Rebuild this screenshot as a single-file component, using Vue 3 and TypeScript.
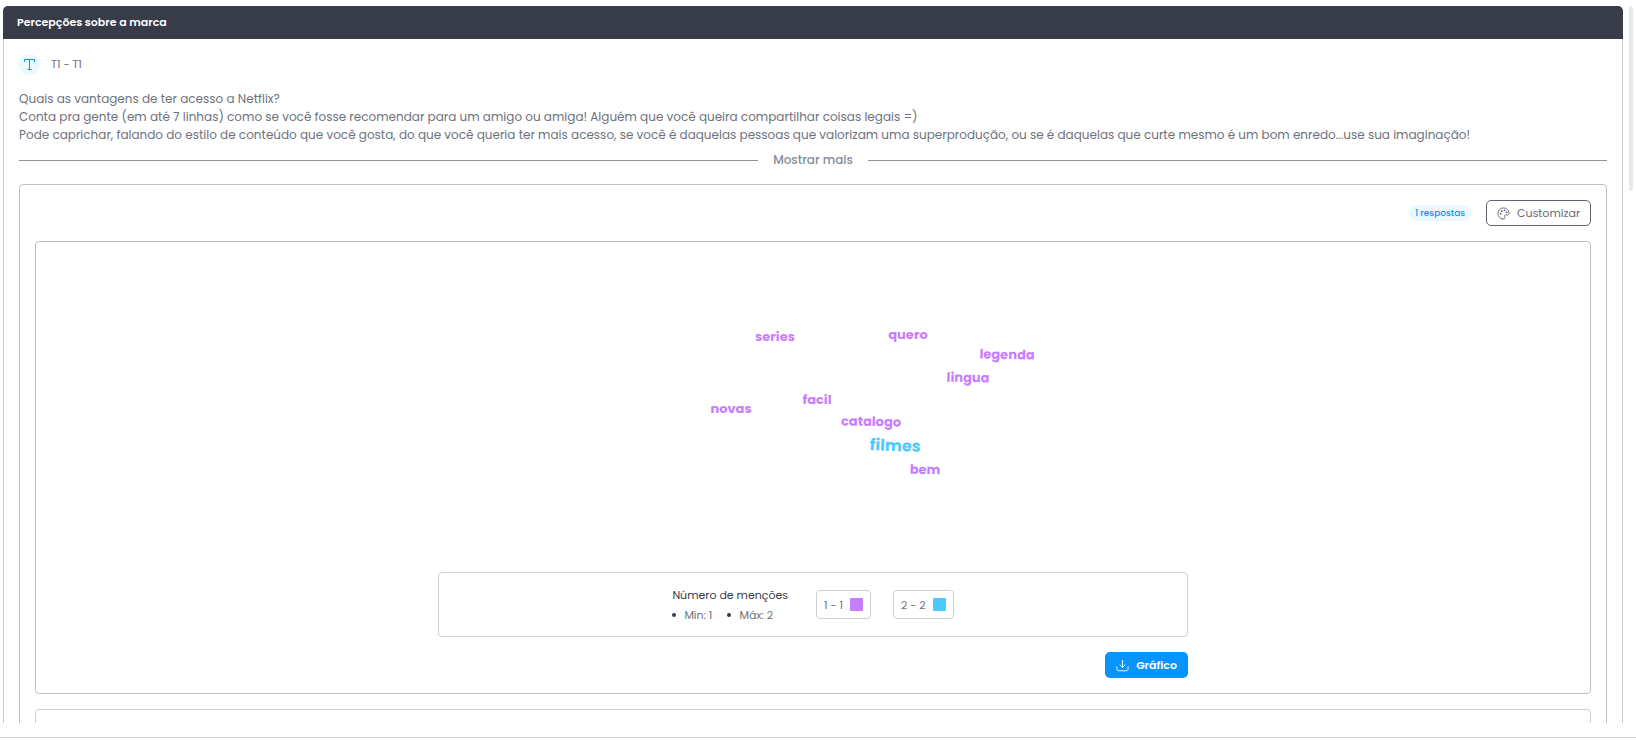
<script setup lang="ts">
interface CloudWord {
  text: string
  x: number
  y: number
  angle: number
  size: number
  color: string
}

const purple = '#c77dff'
const blue = '#4cc9ff'

const description: string[] = [
  'Quais as vantagens de ter acesso a Netflix?',
  'Conta pra gente (em até 7 linhas) como se você fosse recomendar para um amigo ou amiga! Alguém que você queira compartilhar coisas legais =)',
  'Pode caprichar, falando do estilo de conteúdo que você gosta, do que você queria ter mais acesso, se você é daquelas pessoas que valorizam uma superprodução, ou se é daquelas que curte mesmo é um bom enredo...use sua imaginação!',
]

const words: CloudWord[] = [
  { text: 'series', x: 337, y: 84, angle: 0, size: 13, color: purple },
  { text: 'quero', x: 470, y: 82, angle: 0, size: 13, color: purple },
  { text: 'legenda', x: 569, y: 102, angle: 1, size: 13, color: purple },
  { text: 'lingua', x: 530, y: 125, angle: 1, size: 13, color: purple },
  { text: 'facil', x: 379, y: 147, angle: 0, size: 13, color: purple },
  { text: 'novas', x: 293, y: 156, angle: 0, size: 13, color: purple },
  { text: 'catalogo', x: 433, y: 169, angle: 1, size: 13, color: purple },
  { text: 'filmes', x: 457, y: 194, angle: 2, size: 16, color: blue },
  { text: 'bem', x: 487, y: 217, angle: 1, size: 13, color: purple },
]
</script>

<template>
  <div class="page">
    <main class="viewport">
      <section class="card">
        <h1 class="card-title">Percepções sobre a marca</h1>
        <div class="card-body">
          <div class="question">
            <span class="type-badge">
              <svg viewBox="0 0 11 11" width="11" height="11" fill="none" stroke="#0c94f5">
                <path d="M.5 3V.5h10V3M5.500.5v10M3.500 10.500h4" />
              </svg>
            </span>
            <h2 class="question-code">T1 - T1</h2>
          </div>
          <div class="description">
            <p v-for="line in description" :key="line">{{ line }}</p>
          </div>
          <div class="divider"><button type="button" class="more">Mostrar mais</button></div>

          <div class="panel">
            <div class="toolbar">
              <span class="count">1 respostas</span>
              <button type="button" class="button outline">
                <svg viewBox="0 0 14 14" width="13" height="13" fill="none" stroke="currentColor" stroke-linecap="round" stroke-linejoin="round">
                  <path d="M5.400 12.800C2.800 12.100 1 9.800 1 7c0-3.400 2.700-6 6-6s6 2.500 6 5.500c0 1.400-.8 2-2 2H9.300c-1 0-1.500.8-1.100 1.700.5 1 .4 2.800-1.200 2.800-.6 0-1.100-.1-1.600-.2Z" />
                  <circle cx="3.800" cy="7.300" r=".5" />
                  <circle cx="5" cy="4.500" r=".5" />
                  <circle cx="8" cy="3.700" r=".5" />
                  <circle cx="10.300" cy="5.700" r=".5" />
                </svg>
                Customizar
              </button>
            </div>

            <div class="chart">
              <div class="chart-inner">
                <svg class="cloud" viewBox="0 0 750 300" role="img" aria-label="Nuvem de palavras">
                  <text
                    v-for="word in words"
                    :key="word.text"
                    :transform="`translate(${word.x} ${word.y}) rotate(${word.angle})`"
                    :font-size="word.size"
                    :fill="word.color"
                    text-anchor="middle"
                  >{{ word.text }}</text>
                </svg>
                <div class="legend">
                  <div class="mentions">
                    <span class="mentions-title">Número de menções</span>
                    <ul class="range">
                      <li>Mín: 1</li>
                      <li>Máx: 2</li>
                    </ul>
                  </div>
                  <div class="keys">
                    <span class="key">1 - 1 <i class="swatch purple"></i></span>
                    <span class="key">2 - 2 <i class="swatch blue"></i></span>
                  </div>
                </div>
                <button type="button" class="button primary">
                  <svg viewBox="0 0 14 14" width="13" height="13" fill="none" stroke="currentColor" stroke-linecap="round" stroke-linejoin="round">
                    <path d="M1 8.500v2.200c0 1.200.8 2 2 2h8c1.200 0 2-.8 2-2V8.500M7 1.500V9M4.300 6.300 7 9l2.700-2.700" />
                  </svg>
                  Gráfico
                </button>
              </div>
            </div>
            <div class="chart next"></div>
          </div>
        </div>
      </section>
      <div class="scroll-thumb"></div>
    </main>
    <footer class="footer"></footer>
  </div>
</template>

<style>
body {
  background: #fff;
}
</style>

<style scoped>
* {
  box-sizing: border-box;
}

.page {
  display: flex;
  flex-direction: column;
  height: 100vh;
  font-family: Poppins, Inter, sans-serif;
  color: #6e727e;
}

.viewport {
  display: flex;
  flex: 1;
  gap: 6px;
  min-height: 0;
  padding: 6px 3px 0;
  overflow: hidden;
}

.card {
  display: flex;
  flex: 1;
  flex-direction: column;
  min-width: 0;
}

.card-title {
  flex: none;
  margin: 0;
  padding: 0 14px;
  border-radius: 5px 5px 0 0;
  background: #383b48;
  color: #fff;
  font-size: 11px;
  font-weight: 600;
  line-height: 33px;
}

.card-body {
  flex: none;
  padding: 15px;
  border: 1px solid #c9cdd6;
  border-top: 0;
}

.question {
  display: flex;
  align-items: center;
  gap: 11px;
}

.type-badge {
  display: grid;
  place-items: center;
  width: 21px;
  height: 21px;
  border-radius: 50%;
  background: #ebf8ff;
}

.question-code {
  margin: 0;
  font-size: 11px;
  font-weight: 400;
  line-height: 21px;
}

.description {
  margin-top: 15px;
  font-size: 12px;
  line-height: 18px;
}

.description p {
  margin: 0;
}

.divider {
  display: flex;
  align-items: center;
  gap: 15px;
  margin: 7px 0 15px;
}

.divider::before,
.divider::after {
  flex: 1;
  height: 1px;
  background: #8d959f;
  content: '';
}

button {
  font-family: inherit;
  cursor: pointer;
}

.more {
  padding: 0;
  border: 0;
  background: none;
  color: #858e98;
  font-size: 12px;
  font-weight: 500;
  line-height: 18px;
}

.panel {
  padding: 15px;
  border: 1px solid #bdc1ca;
  border-radius: 4px;
}

.toolbar {
  display: flex;
  align-items: center;
  justify-content: flex-end;
  gap: 15px;
}

.count {
  padding: 0 6px;
  border-radius: 8px;
  background: #ebf8ff;
  color: #0c94f5;
  font-size: 9px;
  font-weight: 500;
  line-height: 16px;
}

.button {
  display: flex;
  align-items: center;
  gap: 7px;
  height: 26px;
  padding: 0 10px;
  border: 1px solid transparent;
  border-radius: 5px;
  font-size: 11px;
  line-height: 16px;
}

.outline {
  border-color: #5f6470;
  background: #fff;
  color: #646873;
}

.primary {
  align-self: flex-end;
  background: #0894ff;
  color: #fff;
  font-weight: 600;
}

.chart {
  display: flex;
  justify-content: center;
  margin-top: 15px;
  padding: 15px;
  border: 1px solid #bdc1ca;
  border-radius: 4px;
}

.next {
  min-height: 200px;
  border-color: #cbcfd8;
}

.chart-inner {
  display: flex;
  flex-direction: column;
  gap: 15px;
  width: 100%;
  max-width: 750px;
}

.cloud {
  display: block;
  width: 100%;
  font-weight: 700;
}

.legend {
  display: flex;
  align-items: center;
  justify-content: center;
  gap: 28px;
  min-height: 65px;
  padding: 0 12px;
  border: 1px solid #cbcfd8;
  border-radius: 4px;
  font-size: 11px;
  line-height: 20px;
}

.mentions-title {
  color: #383b48;
}

.range {
  display: flex;
  gap: 15px;
  margin: 0;
  padding: 0;
  list-style: none;
}

.range li {
  display: flex;
  align-items: center;
  gap: 8px;
}

.range li::before {
  width: 4px;
  height: 4px;
  border-radius: 50%;
  background: #383b48;
  content: '';
}

.keys {
  display: flex;
  gap: 22px;
}

.key {
  display: flex;
  align-items: center;
  gap: 7px;
  height: 29px;
  padding: 0 7px;
  border: 1px solid #cbcfd8;
  border-radius: 4px;
}

.swatch {
  width: 13px;
  height: 13px;
  border-radius: 1px;
}

.swatch.purple {
  background: #c77dff;
}

.swatch.blue {
  background: #4cc9ff;
}

.scroll-thumb {
  width: 4px;
  height: 185px;
  border-radius: 2px;
  background: #e5e9ec;
}

.footer {
  flex: none;
  height: 3px;
  margin-top: 14px;
  border-top: 1px solid #d0d0d2;
}
</style>
